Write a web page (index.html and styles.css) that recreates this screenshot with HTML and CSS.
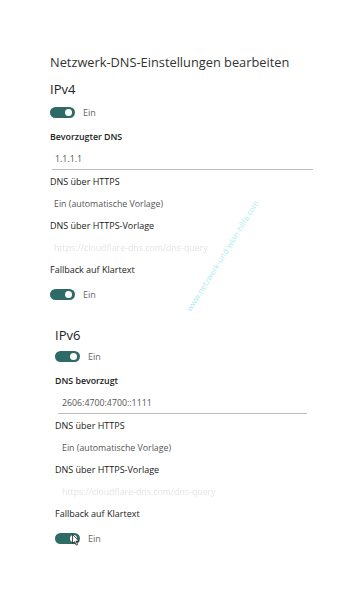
FILE: index.html
```html
<!DOCTYPE html>
<html lang="de">
<head>
<meta charset="utf-8">
<link rel="stylesheet" href="styles.css">
</head>
<body>
<div class="page">
  <div class="title">Netzwerk-DNS-Einstellungen bearbeiten</div>

  <div class="section s4">
    <div class="heading">IPv4</div>
    <div class="toggle-row"><span class="toggle"><span class="knob"></span></span><span class="state">Ein</span></div>
    <div class="label first">Bevorzugter DNS</div>
    <div class="value field">1.1.1.1</div>
    <div class="label">DNS über HTTPS</div>
    <div class="value">Ein (automatische Vorlage)</div>
    <div class="label">DNS über HTTPS-Vorlage</div>
    <div class="value blur">https://cloudflare-dns.com/dns-query</div>
    <div class="label">Fallback auf Klartext</div>
    <div class="toggle-row last"><span class="toggle"><span class="knob"></span></span><span class="state">Ein</span></div>
  </div>

  <div class="section s6">
    <div class="heading">IPv6</div>
    <div class="toggle-row"><span class="toggle"><span class="knob"></span></span><span class="state">Ein</span></div>
    <div class="label first">DNS bevorzugt</div>
    <div class="value field">2606:4700:4700::1111</div>
    <div class="label">DNS über HTTPS</div>
    <div class="value">Ein (automatische Vorlage)</div>
    <div class="label">DNS über HTTPS-Vorlage</div>
    <div class="value blur">https://cloudflare-dns.com/dns-query</div>
    <div class="label">Fallback auf Klartext</div>
    <div class="toggle-row last"><span class="toggle"><span class="knob"></span>
      <svg class="cursor" width="8" height="12" viewBox="0 0 8 12"><path d="M0.5 0.5 L0.5 9.5 L2.6 7.6 L4.2 11.2 L5.6 10.6 L4.1 7.1 L7 7.1 Z" fill="#fff" stroke="#222" stroke-width="0.8" stroke-linejoin="round"/></svg>
    </span><span class="state">Ein</span></div>
  </div>

  <div class="watermark">www.netzwerk-und-wlan-hilfe.com</div>
</div>
</body>
</html>
```
FILE: styles.css
```css
html, body {
  margin: 0;
  padding: 0;
  background: #ffffff;
}
.page {
  position: relative;
  width: 350px;
  height: 600px;
  padding-top: 50px;
  box-sizing: border-box;
  font-family: "Open Sans", "Noto Sans", sans-serif;
  color: #222;
}
.title {
  height: 24px;
  line-height: 24px;
  padding-left: 50px;
  font-size: 12.8px;
  color: #333;
}
.section.s4 {
  padding-left: 50px;
  width: 263px;
}
.section.s6 {
  padding-left: 55px;
  width: 252px;
}
.heading {
  margin-top: 5px;
  height: 20px;
  line-height: 20px;
  font-size: 13px;
  color: #222;
}
.s6 .heading {
  margin-top: 21px;
}
.toggle-row {
  margin-top: 3px;
  height: 20px;
  display: flex;
  align-items: center;
}
.s6 .toggle-row {
  margin-top: 1px;
}
.s6 .toggle-row.last,
.toggle-row.last {
  margin-top: 4px;
}
.toggle {
  position: relative;
  width: 25px;
  height: 11px;
  border-radius: 6px;
  background: #2f6b66;
  flex: none;
}
.knob {
  position: absolute;
  right: 3px;
  top: 2px;
  width: 7px;
  height: 7px;
  border-radius: 50%;
  background: #fff;
}
.cursor {
  position: absolute;
  left: 17px;
  top: 1px;
}
.state {
  margin-left: 8px;
  font-size: 9px;
  color: #666;
}
.label {
  margin-top: 2px;
  height: 20px;
  line-height: 20px;
  font-size: 9px;
  color: #222;
}
.label.first {
  margin-top: 5px;
  font-weight: 600;
  font-size: 8.8px;
}
.value {
  margin-top: 2px;
  height: 20px;
  line-height: 20px;
  padding-left: 4px;
  font-size: 8.8px;
  color: #555;
}
.s6 .value {
  padding-left: 7px;
}
.value.field {
  margin-left: 2px;
  padding-left: 3px;
  border-bottom: 1px solid #bdbdbd;
}
.s6 .value.field {
  margin-left: 3px;
  padding-left: 4px;
}
.value.blur {
  color: #e4e4e4;
  filter: blur(0.5px);
}
.watermark {
  position: absolute;
  left: 132px;
  top: 250px;
  width: 180px;
  text-align: center;
  font-size: 8px;
  color: rgba(90, 215, 235, 0.5);
  transform: rotate(-58deg);
  white-space: nowrap;
}
```
